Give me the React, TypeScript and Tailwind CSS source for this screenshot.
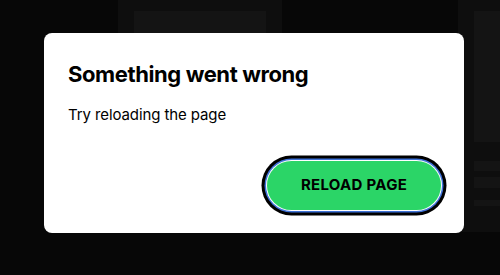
import React from 'react';

const Backdrop: React.FC = () => (
  <div className="flex h-full w-full items-start">
    <div className="ml-[118px] h-[200px] w-[164px] bg-[#0e0e0e] px-4 pt-[11px]">
      <div className="h-[120px] w-full bg-[#141414]" />
    </div>
    <div className="ml-auto h-[232px] w-[42px] bg-[#0e0e0e] pl-4 pt-[11px]">
      <div className="h-[131px] w-full bg-[#141414]" />
      <div className="mt-[19px] h-[10px] w-full bg-[#141414]" />
      <div className="mt-[6px] h-[11px] w-full bg-[#141414]" />
      <div className="mt-[12px] h-[6px] w-full bg-[#141414]" />
    </div>
  </div>
);

export default function App() {
  return (
    <div
      className="relative h-[275px] w-[500px] overflow-hidden bg-[#070707]"
      style={{ fontFamily: 'Inter, "Noto Sans", sans-serif' }}
    >
      <Backdrop />
      <div className="absolute left-[44px] top-[33px] flex h-[200px] w-[420px] flex-col rounded-[8px] bg-white px-6 pt-[26px] pb-[24px]">
        <h1 className="text-[22px] leading-[30px] font-bold tracking-[-0.4px] text-black">
          Something went wrong
        </h1>
        <p className="mt-[15px] text-[15px] leading-[22px] tracking-[-0.1px] text-black">Try reloading the page</p>
        <div className="mt-auto flex justify-end">
          <button className="mr-[-1px] mb-[-1px] flex h-[49px] w-[174px] items-center justify-center rounded-full bg-[#2bd567] text-[15px] font-bold tracking-[0.3px] text-black uppercase shadow-[0_0_0_1px_#ffffff,0_0_0_2.5px_#3f72d8,0_0_0_5.5px_#000000]">
            Reload page
          </button>
        </div>
      </div>
    </div>
  );
}
